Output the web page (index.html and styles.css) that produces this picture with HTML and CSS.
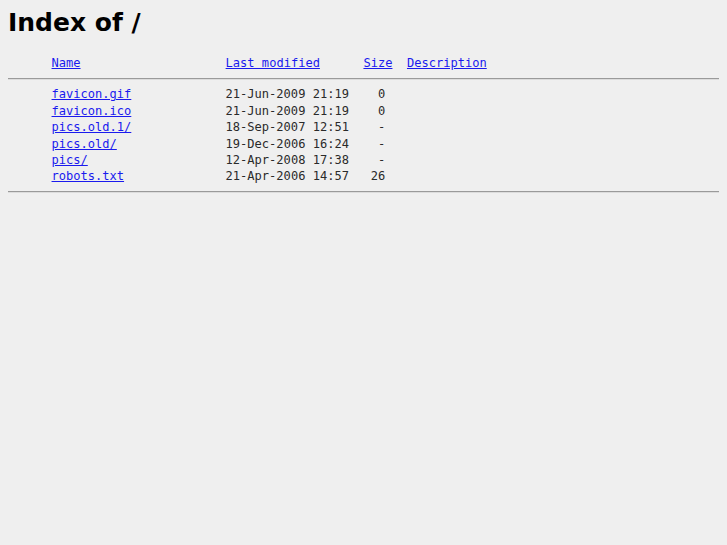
FILE: index.html
```html
<!DOCTYPE html>
<html lang="en">
<head>
    <meta charset="UTF-8">
    <title>Index of /</title>
    <link rel="stylesheet" href="styles.css">
</head>
<body>
    <h1>Index of /</h1>
    <pre class="listing">      <a href="?C=N;O=D">Name</a>                    <a href="?C=M;O=A">Last modified</a>      <a href="?C=S;O=A">Size</a>  <a href="?C=D;O=A">Description</a></pre>
    <hr>
    <pre class="listing rows">      <a href="favicon.gif">favicon.gif</a>             21-Jun-2009 21:19    0
      <a href="favicon.ico">favicon.ico</a>             21-Jun-2009 21:19    0
      <a href="pics.old.1/">pics.old.1/</a>             18-Sep-2007 12:51    -
      <a href="pics.old/">pics.old/</a>               19-Dec-2006 16:24    -
      <a href="pics/">pics/</a>                   12-Apr-2008 17:38    -
      <a href="robots.txt">robots.txt</a>              21-Apr-2006 14:57   26</pre>
    <hr class="end">
</body>
</html>
```
FILE: styles.css
```css
body {
    margin: 8px;
    background: #efefef;
    color: #2a2a2a;
    font-family: "DejaVu Sans", sans-serif;
}

h1 {
    margin: 0;
    font-size: 25px;
    font-weight: bold;
    color: #000;
}

.listing {
    font-family: "DejaVu Sans Mono", monospace;
    font-size: 12.05px;
    line-height: 16.4px;
    margin: 18px 0 0;
}

.listing.rows {
    margin: 0;
}

.listing a {
    color: #1a1aee;
}

hr {
    margin: 7px 0 6px;
    border: 0;
    border-top: 1px solid #9a9a9a;
    border-bottom: 1px solid #dcdcdc;
}

hr.end {
    margin-top: 6px;
}
```
